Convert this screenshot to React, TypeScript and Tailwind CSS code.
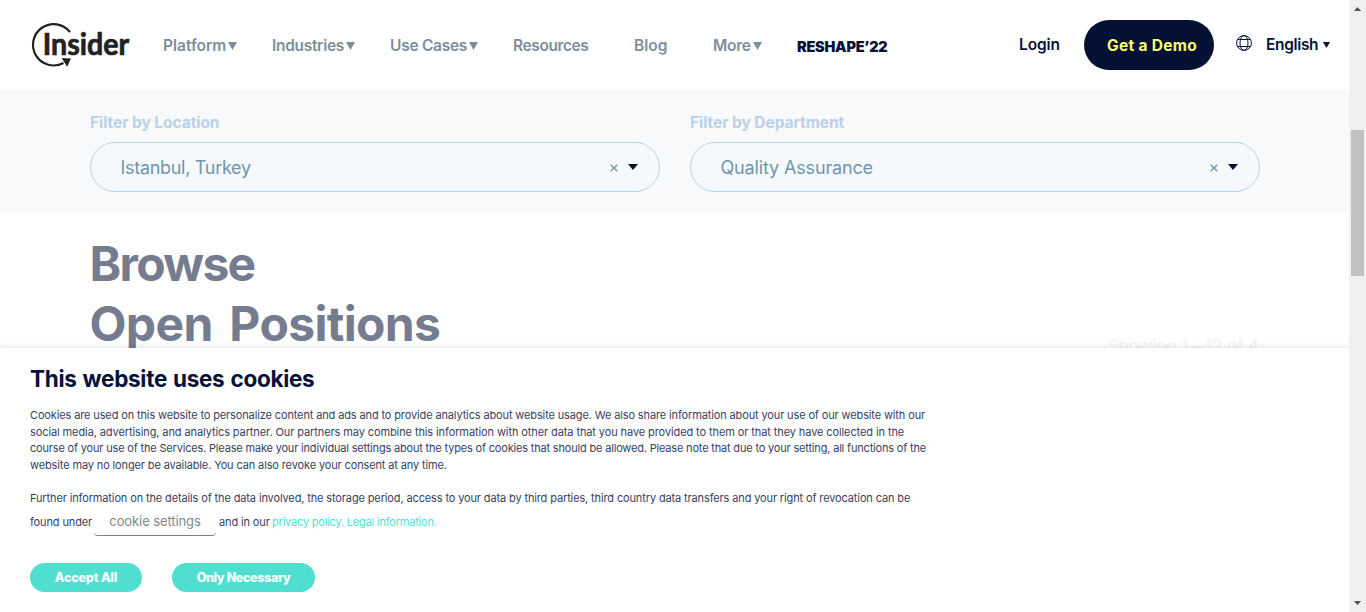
import React from "react";

function Caret({ className }: { className: string }) {
  return (
    <svg viewBox="0 0 10 10" preserveAspectRatio="none" className={className} fill="currentColor" aria-hidden="true">
      <path d="M0 0H10L5 10Z" />
    </svg>
  );
}

function Logo() {
  return (
    <svg width="112" height="52" viewBox="0 0 112 52" className="block overflow-visible" role="img" aria-label="Insider">
      <path d="M38 10A20.7 20.7 0 1 0 31.5 41" fill="none" stroke="#222" strokeWidth="2.2" />
      <path d="M29.6 36L39 36.4L35.2 44.8Z" fill="#222" />
      <text x="10.8" y="32.8" textLength="86.5" lengthAdjust="spacingAndGlyphs" fill="#222" stroke="#222" strokeWidth="0.7" className="font-['Lato'] text-[30px] font-bold">
        Insider
      </text>
    </svg>
  );
}

function Globe() {
  return (
    <svg width="16" height="16" viewBox="0 0 16 16" className="block" fill="none" stroke="#061237" strokeWidth="1">
      <circle cx="8" cy="8" r="7.4" />
      <ellipse cx="8" cy="8" rx="4" ry="7.4" />
      <path d="M1.5 4.5H14.5M1.5 11.5H14.5" />
    </svg>
  );
}

const nav = [
  { label: "Platform", width: "w-[109px]", tracking: "tracking-[-0.02px]", caret: true },
  { label: "Industries", width: "w-[118px]", tracking: "tracking-[-0.3px]", caret: true },
  { label: "Use Cases", width: "w-[123px]", tracking: "tracking-[-0.27px]", caret: true },
  { label: "Resources", width: "w-[121px]", tracking: "tracking-[-0.4px]", caret: false },
  { label: "Blog", width: "w-[79px]", tracking: "tracking-normal", caret: false },
  { label: "More", width: "w-[84px]", tracking: "tracking-[-0.25px]", caret: true },
];

function Header() {
  return (
    <header className="flex h-[90px] shrink-0 bg-white pl-8 whitespace-nowrap">
      <div className="w-[131px] pt-[22px]">
        <Logo />
      </div>
      <nav className="flex h-[92px] items-center text-[15.5px] font-semibold text-[#7d8e9b]">
        {nav.map((n) => (
          <div key={n.label} className={`flex items-center ${n.width}`}>
            <span className={n.tracking}>{n.label}</span>
            {n.caret && <Caret className="mb-px ml-[2px] h-2 w-[9px]" />}
          </div>
        ))}
        <span className="w-[222px] pt-[2px] text-[14.5px] font-black tracking-[-0.25px] text-[#061237]">RESHAPE’22</span>
      </nav>
      <div className="flex h-[90px] items-center text-[15.5px] font-semibold text-[#061237]">
        <span className="w-[65px] tracking-[-0.1px]">Login</span>
        <button className="flex h-[50px] w-[130px] items-center justify-center rounded-full bg-[#041134] pt-px pl-[6px] font-bold tracking-[0.3px] text-[#fbfb72]">
          Get a Demo
        </button>
        <div className="ml-[22px] w-[30px] pb-1">
          <Globe />
        </div>
        <span className="w-[57px] tracking-[-0.35px]">English</span>
        <Caret className="mb-px h-[6px] w-[7px]" />
      </div>
    </header>
  );
}

function Filter({ label, value, tracking }: { label: string; value: string; tracking: string }) {
  return (
    <div className="w-[570px]">
      <div className="h-[30px] pt-px text-[15.5px] leading-[20px] font-bold tracking-[-0.06px] text-[#bad2e6]">{label}</div>
      <div className="flex h-[50px] items-center rounded-full border border-[#bad2e6] bg-[#f5f9fc] pl-[29.5px] text-[18px] text-[#7295ae]">
        <span className={`w-[489.5px] pt-px ${tracking}`}>{value}</span>
        <svg width="8" height="8" viewBox="0 0 8 8" fill="none" stroke="#7295ae" strokeWidth="1.3" className="mt-[2px]">
          <path d="M.8 .8L7.2 7.2M7.2 .8L.8 7.2" />
        </svg>
        <Caret className="ml-[10px] h-[6px] w-[10px] text-[#061237]" />
      </div>
    </div>
  );
}

function CookieBanner() {
  return (
    <section className="absolute inset-x-0 top-[348px] h-[264px] bg-white pl-[30px] whitespace-nowrap text-[#061237] shadow-[0_0_6px_rgba(0,0,0,0.16)]">
      <h2 className="h-[59px] pt-[15px] text-[22.5px] leading-[32px] font-bold tracking-[-0.3px] [word-spacing:1px]">This website uses cookies</h2>
      <div className="text-[11px] leading-[16.7px] tracking-[-0.13px] text-[#38425f]">
        <p>
          <span className="block">Cookies are used on this website to personalize content and ads and to provide analytics about website usage. We also share information about your use of our website with our</span>
          <span className="block tracking-[-0.1px]">social media, advertising, and analytics partner. Our partners may combine this information with other data that you have provided to them or that they have collected in the</span>
          <span className="block tracking-[-0.18px]">course of your use of the Services. Please make your individual settings about the types of cookies that should be allowed. Please note that due to your setting, all functions of the</span>
          <span className="block">website may no longer be available. You can also revoke your consent at any time.</span>
        </p>
        <p className="mt-4">Further information on the details of the data involved, the storage period, access to your data by third parties, third country data transfers and your right of revocation can be</p>
        <div className="flex h-[30px] items-center">
          <span className="w-[64px] pt-[2px]">found under</span>
          <button className="h-[29px] w-[122px] rounded-[4px] border-b border-[#7d7f86] pt-px text-[13px] tracking-[-0.1px] text-[#7f8891]">cookie settings</button>
          <span className="ml-[3px] w-[53px] pt-[2px]">and in our</span>
          <a className="pt-[2px] tracking-[-0.2px] text-[#4fdfd1]">privacy policy. Legal information.</a>
        </div>
      </div>
      <div className="mt-[26px] flex gap-[30px] text-[12.5px] font-extrabold text-white">
        <button className="h-[29px] w-[112px] rounded-full bg-[#4fdfd1] pt-[3px] tracking-[-0.15px]">Accept All</button>
        <button className="h-[29px] w-[143px] rounded-full bg-[#4fdfd1] pt-[3px] tracking-[-0.35px]">Only Necessary</button>
      </div>
    </section>
  );
}

function Scrollbar() {
  return (
    <aside className="flex h-full w-[17px] shrink-0 flex-col items-center bg-[#f0f0f0] text-[#505050]">
      <Caret className="mt-[7px] h-1 w-[7px] rotate-180" />
      <div className="mt-[119px] h-[146px] w-[13px] bg-[#c1c1c1]" />
      <Caret className="mt-auto mb-[7px] h-1 w-[7px]" />
    </aside>
  );
}

export default function App() {
  return (
    <div className="flex h-[612px] w-[1366px] overflow-hidden bg-white font-['Inter',sans-serif]">
      <div className="relative flex h-full w-[1349px] flex-col overflow-hidden">
        <Header />
        <section className="flex h-[122px] shrink-0 gap-[30px] bg-[#f8f9fb] pt-[22px] pl-[90px] whitespace-nowrap">
          <Filter label="Filter by Location" value="Istanbul, Turkey" tracking="tracking-[-0.3px]" />
          <Filter label="Filter by Department" value="Quality Assurance" tracking="tracking-[-0.15px]" />
        </section>
        <main className="flex justify-between pt-[22px] pr-[90px] pl-[89.5px] whitespace-nowrap">
          <h1 className="text-[48px] leading-[60px] font-bold text-[#757c90]">
            <span className="block tracking-[-1.7px]">Browse</span>
            <span className="block tracking-[-0.65px] [word-spacing:6px]">Open Positions</span>
          </h1>
          <p className="mt-[100px] text-[17px] leading-[24px] tracking-[-0.12px] text-[#f2f3f4]">Showing 1 – 12 of 4</p>
        </main>
        <CookieBanner />
      </div>
      <Scrollbar />
    </div>
  );
}
